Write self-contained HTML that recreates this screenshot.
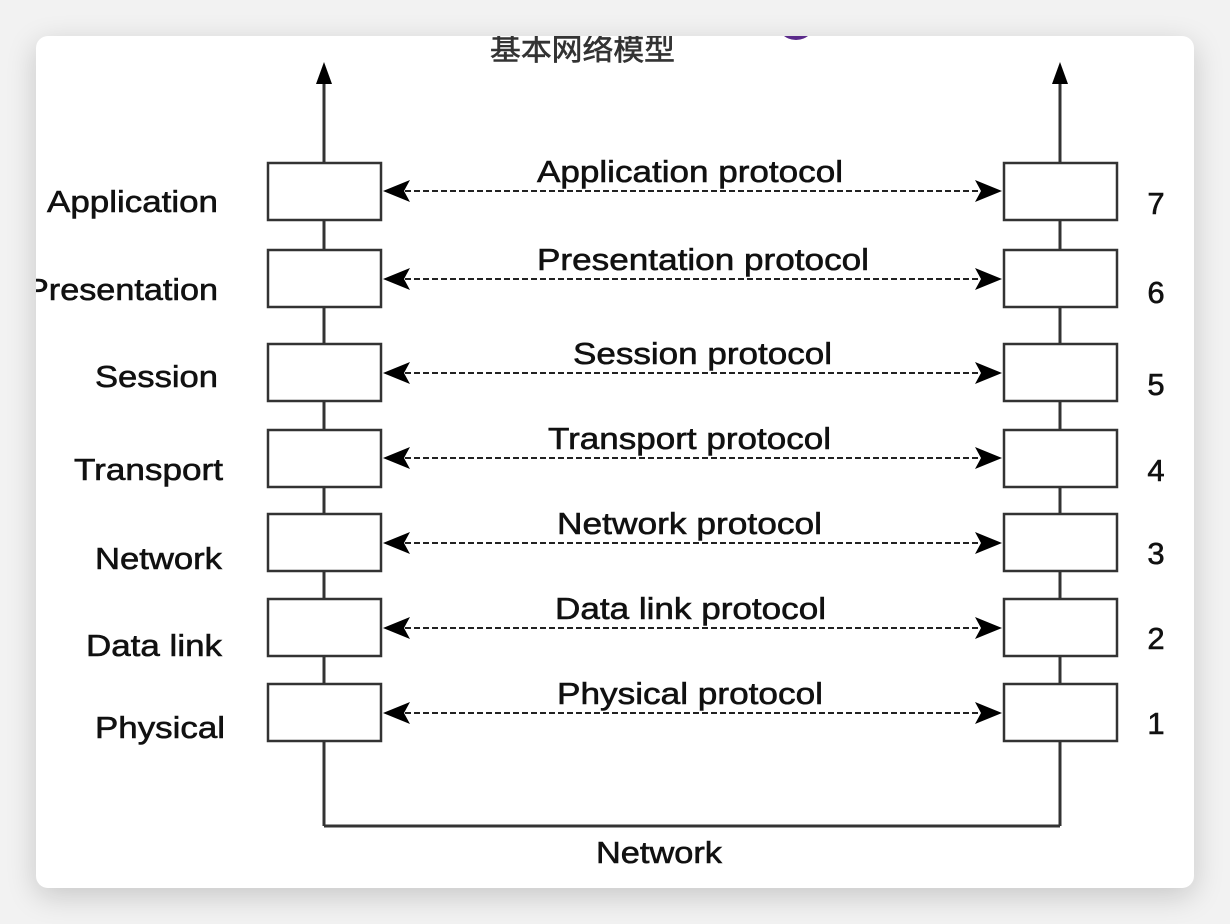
<!DOCTYPE html>
<html><head><meta charset="utf-8"><style>
html,body{margin:0;padding:0;width:1230px;height:924px;background:#f2f2f2;overflow:hidden}
.card{position:absolute;left:36px;top:36px;width:1158px;height:852px;background:#fff;border-radius:12px;box-shadow:0 8px 30px rgba(0,0,0,.18);overflow:hidden}
svg{position:absolute;left:-36px;top:-36px}
text{font-family:"Liberation Sans",Arial,sans-serif;fill:#111;stroke:#111;stroke-width:0.6}
</style></head><body>
<div class="card">
<svg width="1230" height="924" viewBox="0 0 1230 924">
<circle cx="796" cy="20" r="20" fill="#5a2a8a"/>
<circle cx="796" cy="18" r="17" fill="#fff"/>
<text x="490" y="60" font-size="30" textLength="185" lengthAdjust="spacingAndGlyphs" style="font-family:'Liberation Sans','Noto Sans CJK SC',sans-serif;fill:#333;stroke:#333">基本网络模型</text>
<g stroke="#333" stroke-width="3" fill="none">
<line x1="324" y1="82" x2="324" y2="826"/>
<line x1="1060" y1="82" x2="1060" y2="826"/>
<line x1="324" y1="826" x2="1060" y2="826"/>
</g>
<path d="M316,84 L324,62 L332,84 z" fill="#000"/>
<path d="M1052,84 L1060,62 L1068,84 z" fill="#000"/>
<g fill="#fff" stroke="#333" stroke-width="2.5">
<rect x="268" y="163" width="113" height="57"/><rect x="1004" y="163" width="113" height="57"/>
<rect x="268" y="250" width="113" height="57"/><rect x="1004" y="250" width="113" height="57"/>
<rect x="268" y="344" width="113" height="57"/><rect x="1004" y="344" width="113" height="57"/>
<rect x="268" y="430" width="113" height="57"/><rect x="1004" y="430" width="113" height="57"/>
<rect x="268" y="514" width="113" height="57"/><rect x="1004" y="514" width="113" height="57"/>
<rect x="268" y="599" width="113" height="57"/><rect x="1004" y="599" width="113" height="57"/>
<rect x="268" y="684" width="113" height="57"/><rect x="1004" y="684" width="113" height="57"/>
</g>
<g stroke="#222" stroke-width="2" stroke-dasharray="6,3">
<line x1="405" y1="191" x2="980" y2="191"/>
<line x1="405" y1="279" x2="980" y2="279"/>
<line x1="405" y1="373" x2="980" y2="373"/>
<line x1="405" y1="458" x2="980" y2="458"/>
<line x1="405" y1="543" x2="980" y2="543"/>
<line x1="405" y1="628" x2="980" y2="628"/>
<line x1="405" y1="713" x2="980" y2="713"/>
</g>
<g fill="#000">
<path d="M383,191 L410,180 L404,191 L410,202 z"/><path d="M1002,191 L975,180 L981,191 L975,202 z"/>
<path d="M383,279 L410,268 L404,279 L410,290 z"/><path d="M1002,279 L975,268 L981,279 L975,290 z"/>
<path d="M383,373 L410,362 L404,373 L410,384 z"/><path d="M1002,373 L975,362 L981,373 L975,384 z"/>
<path d="M383,458 L410,447 L404,458 L410,469 z"/><path d="M1002,458 L975,447 L981,458 L975,469 z"/>
<path d="M383,543 L410,532 L404,543 L410,554 z"/><path d="M1002,543 L975,532 L981,543 L975,554 z"/>
<path d="M383,628 L410,617 L404,628 L410,639 z"/><path d="M1002,628 L975,617 L981,628 L975,639 z"/>
<path d="M383,713 L410,702 L404,713 L410,724 z"/><path d="M1002,713 L975,702 L981,713 L975,724 z"/>
</g>
<g font-size="31" lengthAdjust="spacingAndGlyphs">
<text x="537" y="182" textLength="306" lengthAdjust="spacingAndGlyphs">Application protocol</text>
<text x="537" y="270" textLength="332" lengthAdjust="spacingAndGlyphs">Presentation protocol</text>
<text x="573" y="364" textLength="259" lengthAdjust="spacingAndGlyphs">Session protocol</text>
<text x="548" y="449" textLength="283" lengthAdjust="spacingAndGlyphs">Transport protocol</text>
<text x="557" y="534" textLength="265" lengthAdjust="spacingAndGlyphs">Network protocol</text>
<text x="555" y="619" textLength="271" lengthAdjust="spacingAndGlyphs">Data link protocol</text>
<text x="557" y="704" textLength="266" lengthAdjust="spacingAndGlyphs">Physical protocol</text>
<text x="596" y="863" textLength="126" lengthAdjust="spacingAndGlyphs">Network</text>
<text x="47" y="212" textLength="171" lengthAdjust="spacingAndGlyphs">Application</text>
<text x="26" y="300" textLength="192" lengthAdjust="spacingAndGlyphs">Presentation</text>
<text x="95" y="387" textLength="123" lengthAdjust="spacingAndGlyphs">Session</text>
<text x="74" y="480" textLength="149" lengthAdjust="spacingAndGlyphs">Transport</text>
<text x="95" y="569" textLength="127" lengthAdjust="spacingAndGlyphs">Network</text>
<text x="86" y="656" textLength="136" lengthAdjust="spacingAndGlyphs">Data link</text>
<text x="95" y="738" textLength="130" lengthAdjust="spacingAndGlyphs">Physical</text>
</g>
<g font-size="31" text-anchor="middle">
<text x="1156" y="214">7</text>
<text x="1156" y="303">6</text>
<text x="1156" y="395">5</text>
<text x="1156" y="481">4</text>
<text x="1156" y="564">3</text>
<text x="1156" y="649">2</text>
<text x="1156" y="734">1</text>
</g>
</svg>
</div>
</body></html>
